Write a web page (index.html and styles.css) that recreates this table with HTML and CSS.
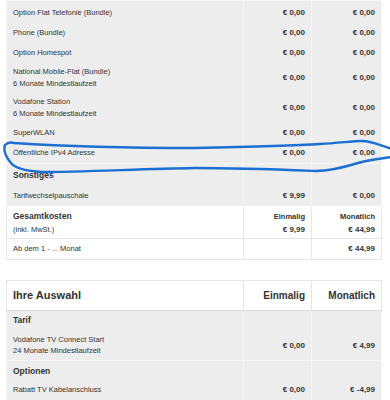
FILE: index.html
```html
<!DOCTYPE html>
<html lang="de">

<head>
    <meta charset="UTF-8">
    <meta name="viewport" content="width=device-width, initial-scale=1.0">
    <title>Kostenübersicht</title>
    <link rel="stylesheet" href="styles.css">
</head>

<body>
    <!-- Kosten der Optionen -->
    <table class="costs">
        <colgroup>
            <col class="c-label">
            <col class="c-once">
            <col class="c-month">
        </colgroup>
        <tbody class="grey">
            <tr class="first">
                <td>Option Flat Telefonie (Bundle)</td>
                <td class="num">€ 0,00</td>
                <td class="num">€ 0,00</td>
            </tr>
            <tr>
                <td>Phone (Bundle)</td>
                <td class="num">€ 0,00</td>
                <td class="num">€ 0,00</td>
            </tr>
            <tr>
                <td>Option Homespot</td>
                <td class="num">€ 0,00</td>
                <td class="num">€ 0,00</td>
            </tr>
            <tr class="two">
                <td>National Mobile-Flat (Bundle)<br>6 Monate Mindestlaufzeit</td>
                <td class="num">€ 0,00</td>
                <td class="num">€ 0,00</td>
            </tr>
            <tr class="two">
                <td>Vodafone Station<br>6 Monate Mindestlaufzeit</td>
                <td class="num">€ 0,00</td>
                <td class="num">€ 0,00</td>
            </tr>
            <tr>
                <td>SuperWLAN</td>
                <td class="num">€ 0,00</td>
                <td class="num">€ 0,00</td>
            </tr>
            <tr>
                <td>Öffentliche IPv4 Adresse</td>
                <td class="num">€ 0,00</td>
                <td class="num">€ 0,00</td>
            </tr>
        </tbody>
        <tbody class="grey">
            <tr class="head">
                <td>Sonstiges</td>
                <td></td>
                <td></td>
            </tr>
            <tr>
                <td>Tarifwechselpauschale</td>
                <td class="num">€ 9,99</td>
                <td class="num">€ 0,00</td>
            </tr>
        </tbody>
        <tbody class="white">
            <tr class="total">
                <td><b class="big">Gesamtkosten</b><br>(inkl. MwSt.)</td>
                <td class="num"><b>Einmalig</b><br>€ 9,99</td>
                <td class="num"><b>Monatlich</b><br>€ 44,99</td>
            </tr>
            <tr>
                <td>Ab dem 1 - ... Monat</td>
                <td></td>
                <td class="num">€ 44,99</td>
            </tr>
        </tbody>
    </table>

    <!-- Ihre Auswahl -->
    <table class="costs choice">
        <colgroup>
            <col class="c-label">
            <col class="c-once">
            <col class="c-month">
        </colgroup>
        <thead>
            <tr>
                <th class="title">Ihre Auswahl</th>
                <th class="num">Einmalig</th>
                <th class="num">Monatlich</th>
            </tr>
        </thead>
        <tbody class="grey">
            <tr class="head">
                <td>Tarif</td>
                <td></td>
                <td></td>
            </tr>
            <tr class="item">
                <td>Vodafone TV Connect Start<br>24 Monate Mindestlaufzeit</td>
                <td class="num">€ 0,00</td>
                <td class="num">€ 4,99</td>
            </tr>
        </tbody>
        <tbody class="grey">
            <tr class="head">
                <td>Optionen</td>
                <td></td>
                <td></td>
            </tr>
            <tr>
                <td>Rabatt TV Kabelanschluss</td>
                <td class="num">€ 0,00</td>
                <td class="num">€ -4,99</td>
            </tr>
        </tbody>
        <tbody class="grey">
            <tr class="spacer">
                <td></td>
                <td></td>
                <td></td>
            </tr>
        </tbody>
    </table>

    <!-- Markierung mit dem Stift -->
    <svg class="mark" width="390" height="400" viewBox="0 0 390 400">
        <path d="M 5 145 C 8 142, 11 142, 14 143 C 60 146, 140 148, 195 148 C 245 147, 290 146, 320 144 C 340 143, 352 141, 362 141 C 372 141, 382 146, 392 149" />
        <path d="M 392 157 C 378 159, 368 160, 358 163 C 345 167, 330 171, 316 171 C 290 170, 240 168, 195 168 C 140 169, 80 172, 42 172 C 25 171, 15 168, 11 163 C 6 157, 3 151, 5 145" />
    </svg>
</body>

</html>
```

FILE: styles.css
```css
body {
    margin: 0;
    padding: 0;
    background-color: #fff;
    color: #333;
    font-family: "Liberation Sans", Arial, sans-serif;
    position: relative;
    overflow: hidden;
    height: 400px;
}

.costs {
    border-collapse: collapse;
    table-layout: fixed;
    width: 375px;
    margin-left: 6px;
    font-size: 7.5px;
    line-height: 12px;
}

.c-label {
    width: 237px;
}

.c-once {
    width: 68px;
}

.c-month {
    width: 70px;
}

td,
th {
    padding: 4px 6px;
    text-align: left;
    vertical-align: middle;
}

.num {
    text-align: right;
    font-weight: bold;
    font-size: 8px;
}

/* graue Blöcke mit hellen Spaltenlinien */
.grey td {
    background-color: #ededed;
    border-left: 1px solid #f6f6f6;
    border-right: 1px solid #f6f6f6;
}

.grey {
    border-top: 1px solid #f7f7f7;
}

.white td {
    background-color: #fff;
    border: 1px solid #e6e6e6;
}

.first td {
    padding-top: 6px;
}

.two td {
    padding-top: 3px;
    padding-bottom: 3px;
}

.head td {
    padding-top: 5px;
    padding-bottom: 5px;
    font-size: 8.5px;
    font-weight: bold;
}

.total td {
    padding-top: 4px;
    padding-bottom: 2px;
    line-height: 13px;
    vertical-align: top;
}

.total b {
    font-size: 7.5px;
}

.total .big {
    font-size: 8.5px;
}

.white tr:first-child td {
    border-top: none;
}

/* zweite Tabelle */
.choice {
    margin-top: 20px;
}

.choice thead th {
    border: 1px solid #e6e6e6;
    border-bottom-color: #dcdcdc;
    padding-top: 8px;
    padding-bottom: 8px;
    line-height: 13px;
    font-size: 10px;
    font-weight: bold;
}

.choice thead .title {
    font-size: 11px;
}

.choice .head td {
    padding-top: 3px;
    padding-bottom: 3px;
}

.choice tbody:nth-of-type(2) .head td {
    padding-top: 4px;
    padding-bottom: 3px;
}

.item td {
    padding-top: 5px;
    padding-bottom: 4px;
    line-height: 11px;
}

.spacer td {
    height: 12px;
}

.mark {
    position: absolute;
    left: 0;
    top: 0;
    pointer-events: none;
}

.mark path {
    fill: none;
    stroke: #1b6fd1;
    stroke-width: 2.4;
    stroke-linecap: round;
    stroke-linejoin: round;
}
```
